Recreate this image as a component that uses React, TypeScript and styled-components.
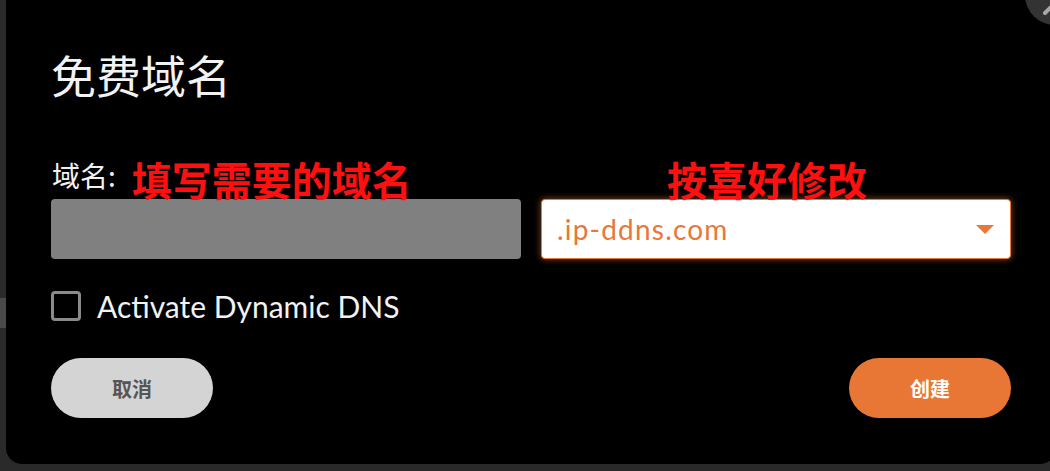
import React from "react";
import styled, { createGlobalStyle } from "styled-components";

const Global = createGlobalStyle`
  html, body { margin: 0; padding: 0; background: #2a2a2a; overflow: hidden; }
  body { width: 1050px; height: 471px; font-family: "Lato", "Noto Sans CJK SC", sans-serif; }
`;

const Page = styled.div`
  position: relative;
  width: 1050px;
  height: 471px;
  overflow: hidden;
  background: #2a2a2a;
`;

const BackdropSliver = styled.div`
  position: absolute;
  left: 0;
  top: 298px;
  width: 6px;
  height: 30px;
  background: #4a4a4a;
`;

const Dialog = styled.div`
  position: relative;
  margin-left: 6px;
  margin-top: -20px;
  width: 1050px;
  box-sizing: border-box;
  padding: 67px 95px 46px 45px;
  background: #000;
  border-radius: 16px;
  display: flex;
  flex-direction: column;
`;

const Title = styled.h1`
  margin: 0;
  height: 56px;
  font-family: "Noto Sans CJK SC", sans-serif;
  font-weight: 400;
  font-size: 45px;
  line-height: 56px;
  color: #f2f2f2;
`;

const FieldGrid = styled.div`
  margin-top: 46px;
  display: grid;
  grid-template-columns: 470px 470px;
  column-gap: 20px;
  grid-template-rows: 50px 60px;
`;

const LabelRow = styled.div`
  display: flex;
  align-items: flex-end;
`;

const Label = styled.span`
  font-family: "Noto Sans CJK SC", sans-serif;
  font-size: 28px;
  line-height: 30px;
  color: #f2f2f2;
  margin-bottom: 9px;
  margin-left: 1px;
`;

const Note = styled.span<{ $indent: number }>`
  font-family: "Noto Sans CJK SC", sans-serif;
  font-weight: 700;
  font-size: 40px;
  line-height: 44px;
  color: #ff1010;
  margin-left: ${(p) => p.$indent}px;
  margin-bottom: -2px;
  position: relative;
  z-index: 1;
  white-space: nowrap;
`;

const GreyInput = styled.div`
  background: #808080;
  border-radius: 4px;
`;

const Select = styled.div`
  box-sizing: border-box;
  background: #fff;
  border: 1px solid #e8773a;
  border-radius: 4px;
  box-shadow: 0 0 6px 1px rgba(232, 119, 58, 0.45);
  display: flex;
  align-items: center;
  justify-content: space-between;
  padding: 0 16px 0 15px;
  color: #e8773a;
  font-size: 28px;
  letter-spacing: 1.2px;
`;

const Caret = styled.span`
  width: 0;
  height: 0;
  border-left: 9px solid transparent;
  border-right: 9px solid transparent;
  border-top: 9px solid #e8773a;
`;

const CheckRow = styled.label`
  margin-top: 32px;
  display: flex;
  align-items: center;
  gap: 16px;
  height: 30px;
  color: #f2f2f2;
  font-size: 30px;
`;

const Box = styled.span`
  box-sizing: border-box;
  width: 30px;
  height: 30px;
  border: 3px solid #8a8a8a;
  border-radius: 4px;
`;

const Actions = styled.div`
  margin-top: 37px;
  display: flex;
  justify-content: space-between;
  width: 960px;
`;

const Button = styled.button<{ $primary?: boolean }>`
  width: 162px;
  height: 60px;
  border: none;
  border-radius: 30px;
  background: ${(p) => (p.$primary ? "#e87735" : "#d4d4d4")};
  color: ${(p) => (p.$primary ? "#fff" : "#555")};
  font-family: "Noto Sans CJK SC", sans-serif;
  font-weight: 700;
  font-size: 20px;
  padding: 0;
  cursor: pointer;
`;

const Close = styled.div`
  position: absolute;
  left: 1025px;
  top: -35px;
  width: 60px;
  height: 60px;
  border-radius: 50%;
  background: #333;
  overflow: hidden;
`;

export default function App() {
  return (
    <Page>
      <Global />
      <BackdropSliver />
      <Dialog>
        <Title>免费域名</Title>
        <FieldGrid>
          <LabelRow>
            <Label>域名:</Label>
            <Note $indent={16}>填写需要的域名</Note>
          </LabelRow>
          <LabelRow>
            <Note $indent={126}>按喜好修改</Note>
          </LabelRow>
          <GreyInput />
          <Select>
            <span>.ip-ddns.com</span>
            <Caret />
          </Select>
        </FieldGrid>
        <CheckRow>
          <Box />
          Activate Dynamic DNS
        </CheckRow>
        <Actions>
          <Button>取消</Button>
          <Button $primary>创建</Button>
        </Actions>
      </Dialog>
      <Close>
        <svg width="60" height="60" viewBox="0 0 60 60">
          <line x1="20" y1="48" x2="40" y2="28" stroke="#a8a8a8" strokeWidth="4" strokeLinecap="round" />
        </svg>
      </Close>
    </Page>
  );
}
